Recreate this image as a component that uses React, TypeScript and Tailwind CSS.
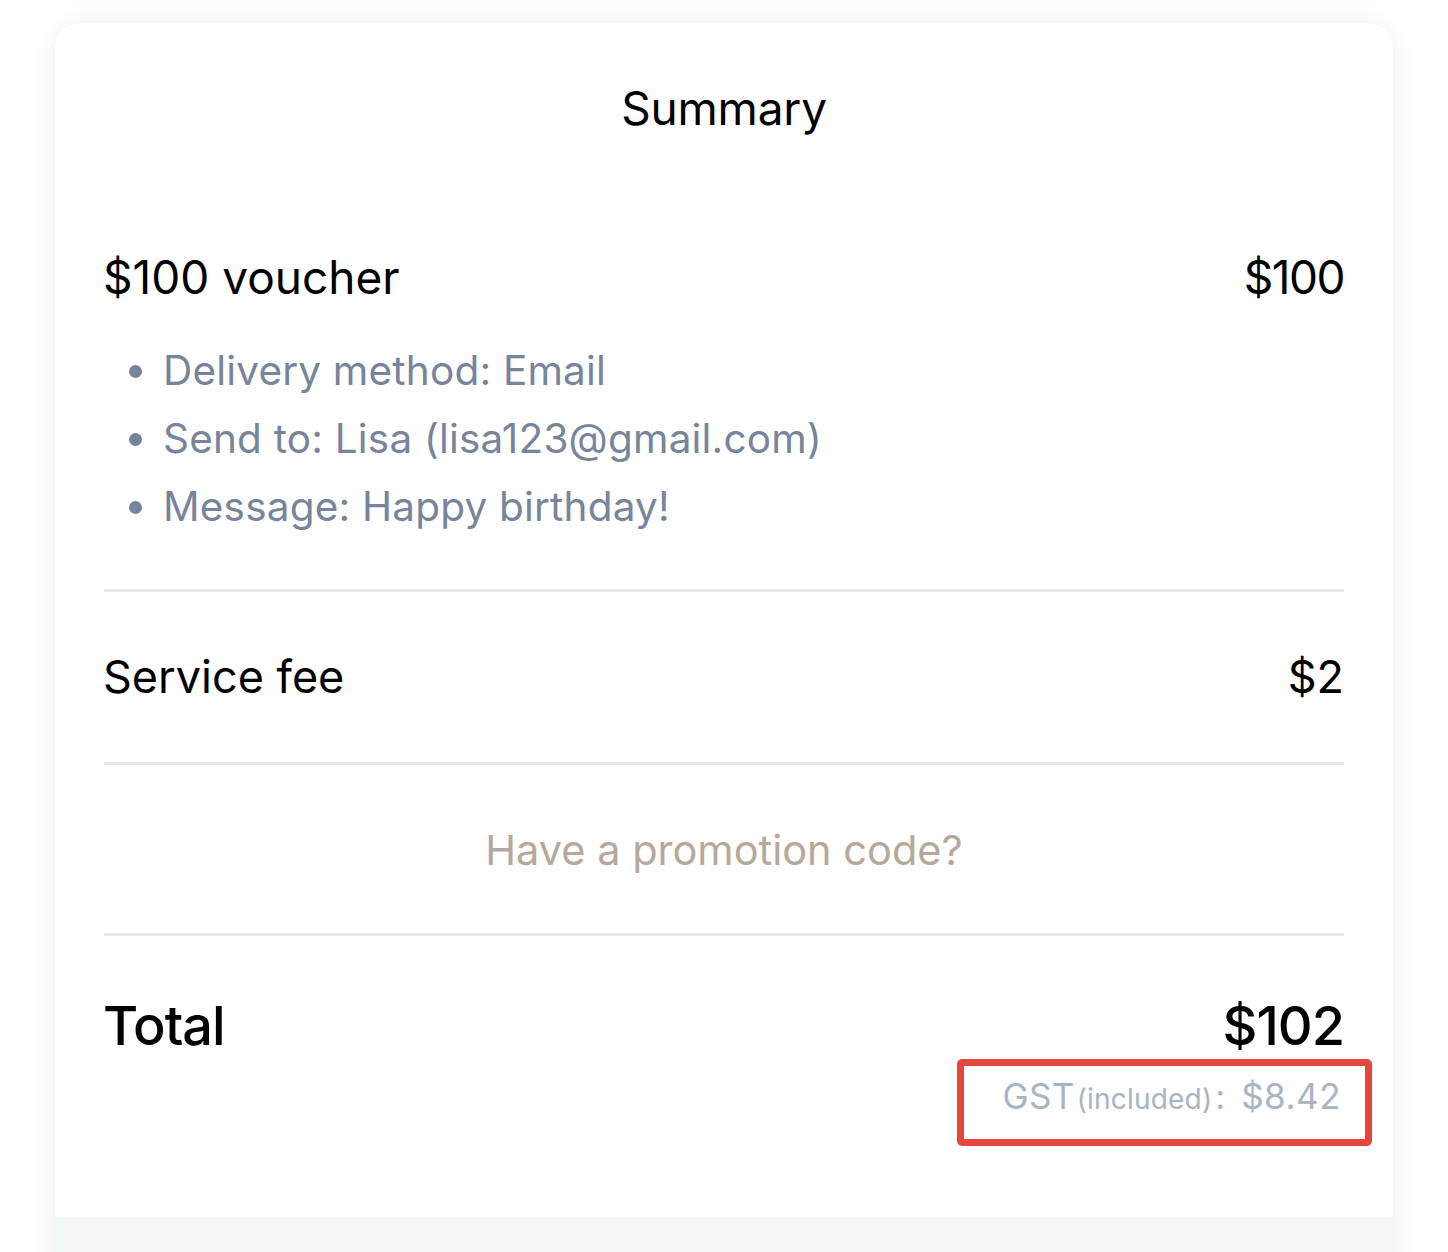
import React from "react";

const font = { fontFamily: "Inter, 'Noto Sans', sans-serif" };

export default function App() {
  return (
    <div
      className="w-[1448px] h-[1252px] bg-white pt-[23px] px-[55px] overflow-hidden"
      style={font}
    >
      <div className="relative h-[1300px] rounded-[26px] bg-white shadow-[0_0_28px_rgba(0,0,0,0.07)] overflow-hidden flex flex-col">
        <div className="px-[49px] flex flex-col flex-1">
          <h1 className="pt-[57px] text-center text-[46px] leading-[56px] text-black tracking-[-0.2px]">
            Summary
          </h1>

          <div className="mt-[113px] flex justify-between items-center text-[46px] leading-[56px] text-black">
            <span className="-ml-[1px]">$100 voucher</span>
            <span className="tracking-[-1.5px]">$100</span>
          </div>

          <ul className="mt-[32px] pl-[58px] text-[40.5px] leading-[68px] text-[#77849b] list-disc marker:text-[#77849b] tracking-[0.2px]">
            <li className="pl-[1px]">Delivery method: Email</li>
            <li className="pl-[1px]">Send to: Lisa (lisa123@gmail.com)</li>
            <li className="pl-[1px]">Message: Happy birthday!</li>
          </ul>

          <div className="mt-[48px] h-[3px] bg-[#e6e9ec]" />

          <div className="py-[57px] flex justify-between items-center text-[45px] leading-[56px] text-black">
            <span className="-ml-[1px]">Service fee</span>
            <span>$2</span>
          </div>

          <div className="h-[3px] bg-[#e6e9ec]" />

          <div className="pt-[57px] pb-[55px] text-center text-[41.5px] leading-[56px] text-[#b5a89c]">
            Have a promotion code?
          </div>

          <div className="h-[3px] bg-[#e6e9ec]" />

          <div className="mt-[58px] flex justify-between items-center text-[54px] leading-[64px] font-medium text-black">
            <span className="-ml-[1px] tracking-[-1px]">Total</span>
            <span className="tracking-[-1px]">$102</span>
          </div>

          <div className="relative mt-[16px] flex justify-end items-baseline leading-[44px] text-[#a9b3c4] pr-[3px]">
            <span className="text-[35px] tracking-[0.3px]">GST</span>
            <span className="text-[28px] ml-[2px] tracking-[0.2px]">(included)</span>
            <span className="text-[34px] ml-[3px]">:</span>
            <span className="text-[35px] ml-[16px] tracking-[0.5px]">$8.42</span>
            <div className="absolute right-[-28px] top-[-15px] w-[415px] h-[87px] border-[7px] border-[#e5473c] rounded-[5px]" />
          </div>
        </div>
        <div className="absolute left-0 right-0 top-[1194px] bottom-0 bg-[#f5f8f9]" />
      </div>
    </div>
  );
}
